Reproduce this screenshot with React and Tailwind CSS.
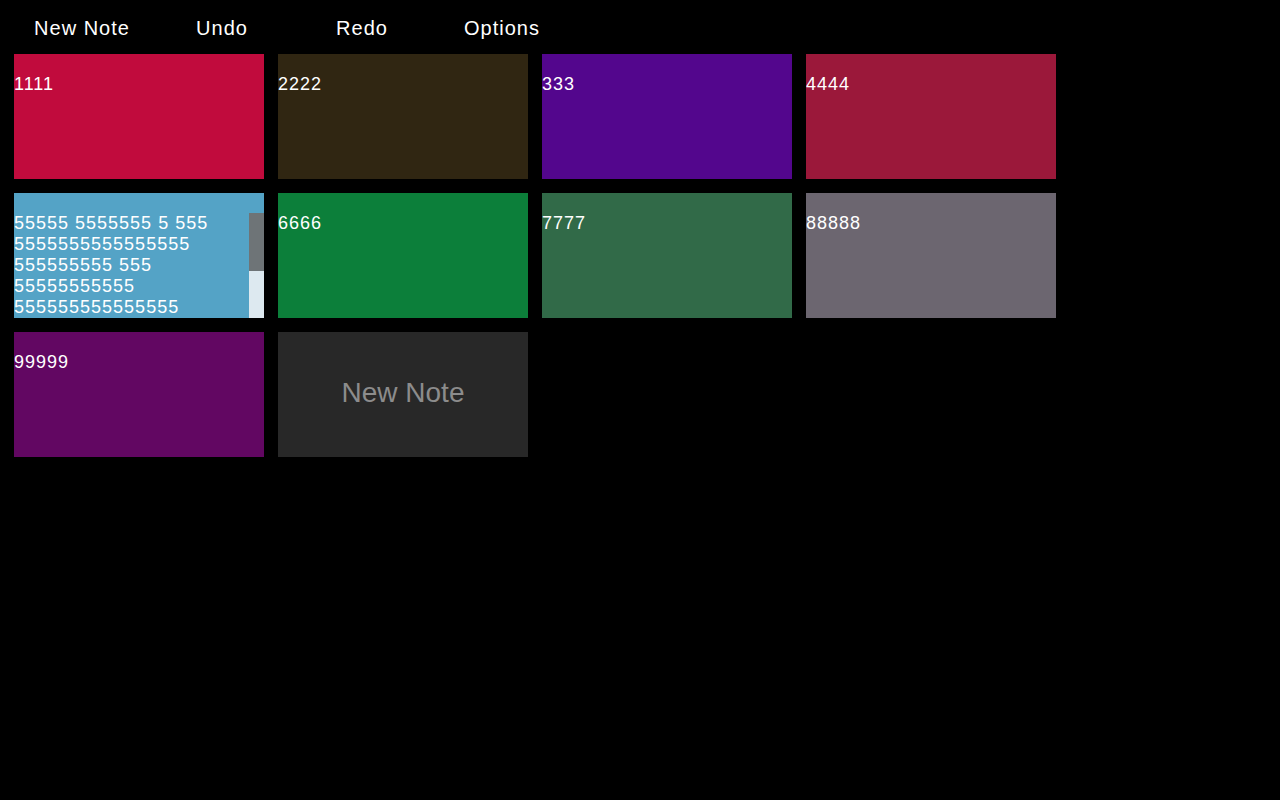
const notes = [
  { id: 1, text: "1111", color: "bg-[#c10b3d]" },
  { id: 2, text: "2222", color: "bg-[#302612]" },
  { id: 3, text: "333", color: "bg-[#53068d]" },
  { id: 4, text: "4444", color: "bg-[#9b183a]" },
  {
    id: 5,
    text: "55555 5555555 5 555 5555555555555555 555555555 555 55555555555 555555555555555 5555555 55555 555555 5555555555 55555 555555 55555555 5555 555",
    color: "bg-[#54a3c6]",
    scroll: true,
  },
  { id: 6, text: "6666", color: "bg-[#0c7f3a]" },
  { id: 7, text: "7777", color: "bg-[#316a48]" },
  { id: 8, text: "88888", color: "bg-[#6c6670]" },
  { id: 9, text: "99999", color: "bg-[#620762]" },
];

const menu = ["New Note", "Undo", "Redo", "Options"];

const NoteCard = ({ note }) => (
  <div className={`w-[250px] h-[125px] pt-5 ${note.color}`}>
    <div className="flex h-[105px]">
      <div className="flex-1 min-w-0 overflow-hidden text-white text-[18px] tracking-[1px] leading-[21px] break-words">
        {note.text}
      </div>
      {/* scrollbar of the overflowing note */}
      {note.scroll && (
        <div className="w-[15px] flex flex-col">
          <div className="h-[58px] bg-[#6e7477]" />
          <div className="flex-1 bg-[#dde9f0]" />
        </div>
      )}
    </div>
  </div>
);

export default function App() {
  return (
    <div
      className="min-h-screen w-full bg-black text-white"
      style={{ fontFamily: '"Liberation Sans", Arial, sans-serif' }}
    >
      <nav className="flex items-center h-[54px] pt-[2px] pl-3">
        {menu.map((item) => (
          <button
            key={item}
            className="w-[140px] text-center text-[20px] tracking-[1px] text-white"
          >
            {item}
          </button>
        ))}
      </nav>
      <div className="grid grid-cols-[repeat(4,250px)] gap-[14px] px-[14px]">
        {notes.map((note) => (
          <NoteCard key={note.id} note={note} />
        ))}
        <button className="w-[250px] h-[125px] pb-1 bg-[#282828] text-[#8c8c8c] text-[28px] flex items-center justify-center">
          New Note
        </button>
      </div>
    </div>
  );
}
